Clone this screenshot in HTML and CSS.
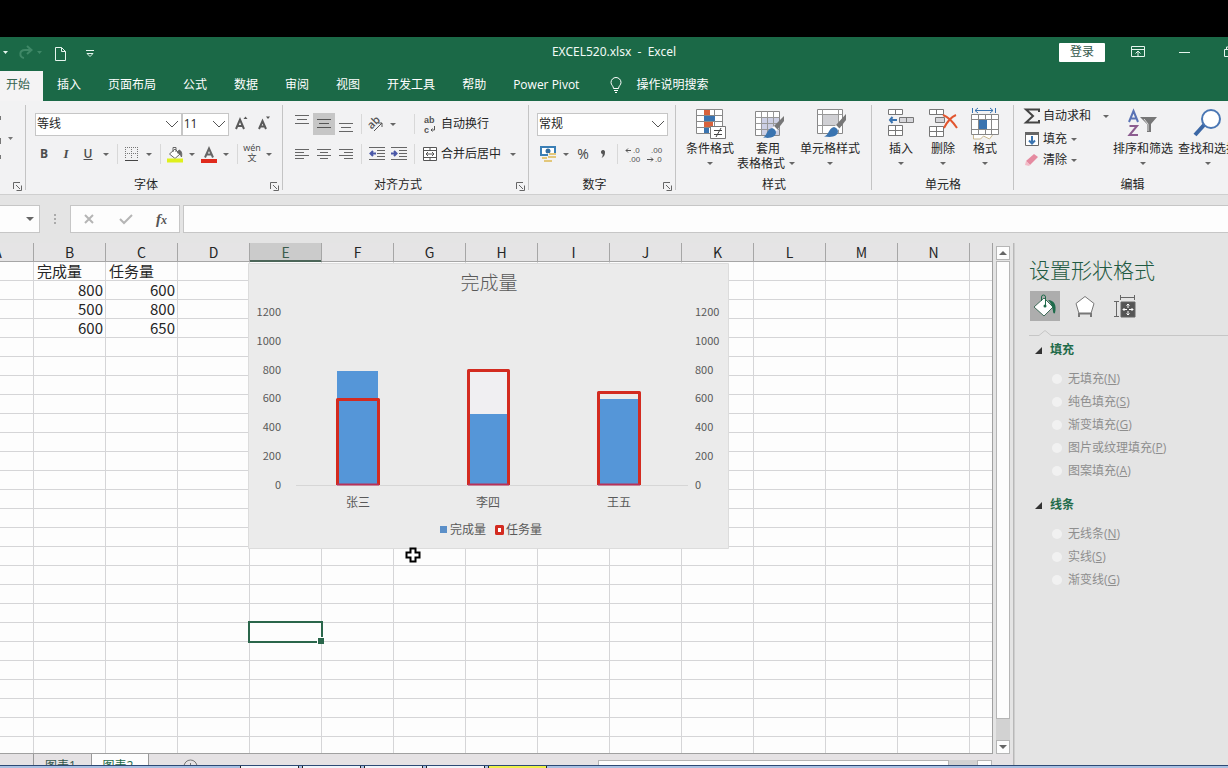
FILE: index.html
```html
<!DOCTYPE html>
<html lang="zh-CN">
<head>
<meta charset="utf-8">
<title>EXCEL520.xlsx - Excel</title>
<link rel="stylesheet" href="styles.css">
</head>
<body>
<div class="letterbox"></div>
<header class="titlebar">
  <div class="quick">
    <svg width="100" height="18" viewBox="0 0 100 18" fill="none" stroke="#e6f5ee">
      <path d="M3 8h5l-2.500 3z" fill="#e6f5ee" stroke="none"/>
      <path d="M24 15c-5-1-5-8 1-8h6M27 3l4.500 4-4.500 4" stroke="#3f8867" stroke-width="2"/>
      <path d="M37 8h5l-2.500 3z" fill="#3f8867" stroke="none"/>
      <path d="M55.500 4.500h6l4 4v9h-10zM61.500 4.500v4h4"/>
      <path d="M86 7.500h8M87 10.500l3 3 3-3z"/>
    </svg>
  </div>
  <h1 class="doc-title">EXCEL520.xlsx&nbsp; -&nbsp; Excel</h1>
  <div class="window-tools">
    <button class="login">登录</button>
    <button class="wbtn" aria-label="功能区显示选项"><svg width="14" height="12" viewBox="0 0 14 12" fill="none" stroke="#e6f5ee"><path d="M.5.5h13v10H.5zM.5 3.500h13M7 10V5M4.500 7.500L7 5l2.500 2.500"/></svg></button>
    <button class="wbtn" aria-label="最小化"><svg width="11" height="12" viewBox="0 0 11 12" stroke="#e6f5ee"><path d="M0 6.500h11"/></svg></button>
    <button class="wbtn" aria-label="还原"><svg width="11" height="12" viewBox="0 0 11 12" fill="none" stroke="#e6f5ee"><path d="M.5 3.500h7v7h-7zM2.500 3V1h7v7h-2"/></svg></button>
  </div>
</header>
<nav class="tabs">
  <button class="tab active">开始</button><button class="tab">插入</button><button class="tab">页面布局</button><button class="tab">公式</button><button class="tab">数据</button><button class="tab">审阅</button><button class="tab">视图</button><button class="tab">开发工具</button><button class="tab">帮助</button><button class="tab">Power Pivot</button>
  <button class="tab tell"><svg width="12" height="16" viewBox="0 0 12 16" fill="none" stroke="#fff"><path d="M3.500 11.500C3.500 9 1 8 1 5.500a5 5 0 0 1 10 0C11 8 8.500 9 8.500 11.500zM4 13.500h4M5 15.500h2"/></svg>操作说明搜索</button>
</nav>

<section class="ribbon">
  <div class="group edge">
    <svg width="16" height="60" viewBox="0 0 16 60" fill="#777"><path d="M0 4h1v4H0zM0 26h1v6H0zM0 43h1v4H0zM8 25h5l-2.500 3z"/></svg>
    <h2 class="glabel"></h2><svg class="launch" width="9" height="9" viewBox="0 0 9 9" fill="none" stroke="#666"><path d="M.5 7V.5H7M3 3l4 4M8.500 3.500v5h-5"/></svg>
  </div>

  <div class="group font">
    <div class="row">
      <select class="combo face" aria-label="字体"><option>等线</option></select><select class="combo size" aria-label="字号"><option>11</option></select>
      <button class="b22" aria-label="增大字号"><svg width="16" height="20" viewBox="0 0 16 20" fill="none" stroke="#5a5a5a" stroke-width="2"><path d="M2 15L6 5.500 10 15M3.500 12h5"/><path d="M9.500 5l2-2.500 2 2.500z" fill="#555" stroke="none"/></svg></button>
      <button class="b22" aria-label="减小字号"><svg width="16" height="20" viewBox="0 0 16 20" fill="none" stroke="#5a5a5a" stroke-width="2"><path d="M3 15l3.500-8 3.500 8M4.500 12.500h4"/><path d="M10 2.500h4L12 5z" fill="#555" stroke="none"/></svg></button>
    </div>
    <div class="row">
      <button class="b22 bold">B</button><button class="b22 ital">I</button><button class="b22 und">U</button><i class="caret"></i><i class="sep"></i>
      <button class="b20" aria-label="边框"><svg width="14" height="14" viewBox="0 0 14 14" fill="none" stroke="#777"><path d="M.5 0v12M6.500 0v12M12.500 0v12M0 .5h13M0 6.500h13" stroke-dasharray="1 1"/><path d="M0 13.500h13" stroke="#444"/></svg></button><i class="caret"></i><i class="sep"></i>
      <button class="b20" aria-label="填充颜色"><svg width="16" height="17" viewBox="0 0 16 17" fill="none" stroke="#666"><path d="M2.500 8l5.500-5 5 5-5 4.500zM6 6V1.500h3V6" fill="#fff"/><path d="M12 4c3 1 3 4 2.500 7-1-3-3-4-4-4z" fill="#666"/><path d="M0 14.500h16" stroke="#dff01c" stroke-width="4"/></svg></button><i class="caret"></i>
      <button class="b20" aria-label="字体颜色"><svg width="16" height="17" viewBox="0 0 16 17" fill="none" stroke="#666" stroke-width="2"><path d="M4 11.500L8 2.500l4 9M5.500 8.500h5"/><path d="M0 15h16" stroke="#e02a1c" stroke-width="4"/></svg></button><i class="caret"></i><i class="sep"></i>
      <button class="b20 pinyin"><span>wén</span><span>文</span></button><i class="caret"></i>
    </div>
    <h2 class="glabel">字体</h2><svg class="launch" width="9" height="9" viewBox="0 0 9 9" fill="none" stroke="#666"><path d="M.5 7V.5H7M3 3l4 4M8.500 3.500v5h-5"/></svg>
  </div>

  <div class="group">
    <div class="row">
      <button class="b22" aria-label="顶端对齐"><svg width="14" height="20" viewBox="0 0 14 20" stroke="#666"><path d="M0 1.500h14M2 5.500h10M0 9.500h14"/></svg></button><button class="b22 on" aria-label="垂直居中"><svg width="14" height="20" viewBox="0 0 14 20" stroke="#555"><path d="M0 5.500h14M2 9.500h10M0 13.500h14"/></svg></button><button class="b22" aria-label="底端对齐"><svg width="14" height="20" viewBox="0 0 14 20" stroke="#666"><path d="M0 9.500h14M2 13.500h10M0 17.500h14"/></svg></button><i class="sep"></i>
      <span class="pair"><button class="b20" aria-label="方向"><svg width="18" height="18" viewBox="0 0 18 18" fill="#555"><text x="1" y="12" font-size="11" font-weight="600" transform="rotate(-45 6 9)">ab</text><path d="M7 16l8-8M11 8h4v4" fill="none" stroke="#555"/></svg></button><i class="caret"></i></span><i class="sep"></i>
      <button class="label"><svg class="mini" width="16" height="20" viewBox="0 0 16 20" fill="#555"><text x="2" y="9" font-size="9" font-weight="700">ab</text><text x="2" y="19" font-size="9" font-weight="700">c</text><path d="M12.500 12v4H9M10.500 14.500L9 16l1.500 1.500" fill="none" stroke="#555"/></svg>自动换行</button>
    </div>
    <div class="row">
      <button class="b22" aria-label="左对齐"><svg width="14" height="12" viewBox="0 0 14 12" stroke="#666"><path d="M0 1.500h14M0 4.500h9M0 7.500h14M0 10.500h9"/></svg></button><button class="b22" aria-label="居中"><svg width="14" height="12" viewBox="0 0 14 12" stroke="#666"><path d="M0 1.500h14M3 4.500h8M0 7.500h14M3 10.500h8"/></svg></button><button class="b22" aria-label="右对齐"><svg width="14" height="12" viewBox="0 0 14 12" stroke="#666"><path d="M0 1.500h14M5 4.500h9M0 7.500h14M5 10.500h9"/></svg></button><i class="sep"></i>
      <span class="pair"><button class="b22" aria-label="减少缩进"><svg width="16" height="14" viewBox="0 0 16 14" fill="none" stroke="#666"><path d="M0 .5h16M8 3.500h8M8 6.500h8M8 9.500h8M0 12.500h16"/><path d="M7 6.500H2M4 4L1.500 6.500 4 9" stroke="#4a58a8" stroke-width="2"/></svg></button><button class="b22" aria-label="增加缩进"><svg width="16" height="14" viewBox="0 0 16 14" fill="none" stroke="#666"><path d="M0 .5h16M8 3.500h8M8 6.500h8M8 9.500h8M0 12.500h16"/><path d="M0 6.500h5M3 4l2.500 2.500L3 9" stroke="#4a58a8" stroke-width="2"/></svg></button></span><i class="sep"></i>
      <button class="label"><svg width="16" height="16" viewBox="0 0 16 16" fill="#fff" stroke="#555"><path d="M1.500 1.500h13v13h-13zM1.500 4.500h13M1.500 11.500h13M8 1.500v3M8 11.500v3M4 8h8M6 6L4 8l2 2M10 6l2 2-2 2"/></svg>合并后居中</button><i class="caret wide"></i>
    </div>
    <h2 class="glabel shifted">对齐方式</h2><svg class="launch" width="9" height="9" viewBox="0 0 9 9" fill="none" stroke="#666"><path d="M.5 7V.5H7M3 3l4 4M8.500 3.500v5h-5"/></svg>
  </div>

  <div class="group">
    <div class="row"><select class="combo numfmt" aria-label="数字格式"><option>常规</option></select></div>
    <div class="row">
      <button class="b22" aria-label="会计数字格式"><svg width="18" height="18" viewBox="0 0 18 18"><path d="M2 2h14v8H2z" fill="#fff" stroke="#3b7fb5" stroke-width="2"/><circle cx="9" cy="6" r="2.500" fill="#356fa0"/><path d="M9 8h9v10H5v-5h4z" fill="#f2f2f3"/><path d="M10 8h7v2h-7zM9 11h8v2H9zM3 12h5v2H3zM5 15h8v2H5z" fill="#e3c77a"/></svg></button><i class="caret"></i>
      <button class="b20 pct">%</button><button class="b20 comma" aria-label="千位分隔"><svg width="6" height="8" viewBox="0 0 6 8" fill="#555"><path d="M1 1.500a2 2 0 1 1 4 1C5 5 4 7 1.500 8 2.500 6.500 3 5 2.500 4A2 2 0 0 1 1 1.500z"/></svg></button><i class="sep"></i>
      <button class="b22" aria-label="增加小数位数"><svg class="mini" width="20" height="20" viewBox="0 0 20 20" fill="#555"><text x="10" y="9" font-size="8">.0</text><text x="6" y="18" font-size="8">.00</text><path d="M8 6.500H3M5 4.500l-2 2 2 2" fill="none" stroke="#555"/></svg></button><button class="b22" aria-label="减少小数位数"><svg class="mini" width="20" height="20" viewBox="0 0 20 20" fill="#555"><text x="6" y="9" font-size="8">.00</text><text x="10" y="18" font-size="8">.0</text><path d="M2 15.500h6M6 13.500l2 2-2 2" fill="none" stroke="#555"/></svg></button>
    </div>
    <h2 class="glabel shifted">数字</h2><svg class="launch" width="9" height="9" viewBox="0 0 9 9" fill="none" stroke="#666"><path d="M.5 7V.5H7M3 3l4 4M8.500 3.500v5h-5"/></svg>
  </div>

  <div class="group bigs">
    <div class="bigrow styles">
      <button class="big"><svg width="32" height="32" viewBox="0 0 32 32"><path d="M2.500 1.500h26v24h-26zM2.500 7.500h26M2.500 13.500h26M2.500 19.500h26M10.500 1.500v24M20.500 1.500v24" fill="#fff" stroke="#888"/><path d="M10 2h6v5h-6zM10 14h9v5h-9z" fill="#d8623c"/><path d="M10 8h11v5H10zM10 20h5v5h-5z" fill="#3a74b0"/><path d="M16.500 18.500h15v12h-15z" fill="#fff" stroke="#777"/><path d="M20 22.500h8M20 26.500h8M27 20l-5 9" stroke="#444"/></svg><span>条件格式</span><i class="caret"></i></button>
      <button class="big"><svg width="32" height="32" viewBox="0 0 32 32"><path d="M3.500 3.500h24v24h-24z" fill="#fff" stroke="#888"/><path d="M10 10h17v17H10z" fill="#cdd0e4"/><path d="M3.500 9.500h24M3.500 15.500h24M3.500 21.500h24M9.500 3.500v24M15.500 3.500v24M21.500 3.500v24" stroke="#999"/><path d="M32 8l-10 10 3 4 7-9z" fill="#777"/><path d="M22 18l4 4-4 2-3-3z" fill="#fff"/><path d="M20 20c5 1 6 8-1 9.500-4 1-6 0-8 0 4-1 3-8 9-9.500z" fill="#3a74b0"/></svg><span>套用</span><span class="tail">表格格式<i class="caret"></i></span></button>
      <button class="big"><svg width="32" height="32" viewBox="0 0 32 32"><path d="M3.500 1.500h25v24h-25z" fill="#fff" stroke="#888"/><path d="M8 7h16v10H8z" fill="#d0d0d4"/><path d="M3.500 6.500h25M3.500 17.500h25M8.500 1.500v24M24.500 1.500v24" stroke="#999"/><path d="M32 6L22 17l3 4 7-9z" fill="#777"/><path d="M22 17l4 4-4 2-3-3z" fill="#fff"/><path d="M20 19c5 1 6 8-1 9.500-4 1-6 0-9 0 5-1 4-8 10-9.500z" fill="#3a74b0"/></svg><span>单元格样式</span><i class="caret"></i></button>
    </div>
    <h2 class="glabel">样式</h2>
  </div>

  <div class="group bigs">
    <div class="bigrow cells">
      <button class="big"><svg width="30" height="32" viewBox="0 0 30 32" fill="#fff" stroke="#777"><path d="M2.500 1.500h14v5h-14zM9.500 1.500v5M2.500 17.500h14v10h-14zM2.500 22.500h14M9.500 17.500v10"/><path d="M13.500 9.500h14v5h-14zM20.500 9.500v5" fill="#d6d6da"/><path d="M11 12H4M6.500 9L4 12l2.500 3" fill="none" stroke="#3a74b0" stroke-width="2"/></svg><span>插入</span><i class="caret"></i></button>
      <button class="big"><svg width="30" height="32" viewBox="0 0 30 32" fill="#fff" stroke="#777"><path d="M1.500 1.500h14v5h-14zM8.500 1.500v5M1.500 18.500h14v10h-14zM1.500 23.500h14M8.500 18.500v10"/><path d="M7.500 9.500h9v5h-9z" fill="#d6d6da"/><path d="M15 7c5 2 10 7 14 13M28 7c-5 2-9 7-12 13" fill="none" stroke="#e2562f" stroke-width="2"/></svg><span>删除</span><i class="caret"></i></button>
      <button class="big"><svg width="30" height="32" viewBox="0 0 30 32" fill="#fff" stroke="#888"><path d="M1.500 6.500h27v20h-27zM1.500 11.500h27M1.500 21.500h27M8.500 6.500v20M15.500 6.500v20M21.500 6.500v20"/><path d="M9 12h8v9H9z" fill="#3a74b0" stroke="none"/><path d="M2.500 0v5M25.500 0v5M5 2.500h18M8 0L5 2.500 8 5M20 0l3 2.500L20 5" stroke="#3a74b0" fill="none"/><path d="M3.500 27v4h7l3-3 6 3 3-4" stroke="#c8b78e"/></svg><span>格式</span><i class="caret"></i></button>
    </div>
    <h2 class="glabel">单元格</h2>
  </div>

  <div class="group bigs last">
    <div class="bigrow edit">
      <div class="stack">
        <button class="label"><svg width="16" height="16" viewBox="0 0 16 16" fill="none" stroke="#444" stroke-width="2"><path d="M15 4V1.500H2L9 8l-7 6.500h13V12"/></svg>自动求和<i class="caret wide"></i></button>
        <button class="label"><svg width="16" height="16" viewBox="0 0 16 16" fill="#fff" stroke="#666"><path d="M1.500 1.500h13v13h-13z"/><path d="M1 2.500h14" stroke-width="3"/><path d="M8 5v7M5 9.500L8 12.500l3-3" fill="none" stroke="#3a74b0" stroke-width="2"/></svg>填充<i class="caret"></i></button>
        <button class="label"><svg width="16" height="14" viewBox="0 0 16 14"><path d="M2 8l8-7 4 3-8 8z" fill="#e58aa0"/><path d="M2 8l4 4-1 1-4-1z" fill="#f3bcc8"/></svg>清除<i class="caret"></i></button>
      </div>
      <button class="big"><svg width="30" height="32" viewBox="0 0 30 32" fill="none" stroke-width="2"><path d="M1 14L5.500 3 10 14M2.500 10.500h6" stroke="#5a73b5"/><path d="M1.500 18H9l-7.500 9H10" stroke="#8c5c8f"/><path d="M12 9h17l-6 7v8h-4v-8z" fill="#777"/><path d="M16 11l4 5v7" stroke="#ddd" stroke-width="1"/></svg><span>排序和筛选</span><i class="caret"></i></button>
      <button class="big"><svg width="30" height="32" viewBox="0 0 30 32"><path d="M11 17L2 27" stroke="#3b67a5" stroke-width="4"/><circle cx="18" cy="11" r="9" fill="#fff" stroke="#4a77b4" stroke-width="2"/></svg><span>查找和选择</span><i class="caret"></i></button>
    </div>
    <h2 class="glabel">编辑</h2>
  </div>
</section>

<section class="formula">
  <button class="namebox" aria-label="名称框"><i class="caret"></i></button>
  <i class="grip"></i>
  <div class="fxbox">
    <svg width="12" height="12" viewBox="0 0 12 12" stroke="#b5b5b5" stroke-width="2"><path d="M2 2l8 8M10 2l-8 8"/></svg>
    <svg width="14" height="12" viewBox="0 0 14 12" fill="none" stroke="#b5b5b5" stroke-width="2"><path d="M1 6l4 4 8-8"/></svg>
    <span class="fx">f<small>x</small></span>
  </div>
  <input class="fxinput" type="text" aria-label="编辑栏">
</section>

<main class="work">
  <div class="left">
    <div class="gridwrap">
      <div class="sheet">
        <table class="cells-table">
          <thead><tr><th>A</th><th>B</th><th>C</th><th>D</th><th class="sel">E</th><th>F</th><th>G</th><th>H</th><th>I</th><th>J</th><th>K</th><th>L</th><th>M</th><th>N</th><th></th></tr></thead>
          <tbody>
            <tr><td></td><td class="txt">完成量</td><td class="txt">任务量</td></tr>
            <tr><td></td><td>800</td><td>600</td></tr>
            <tr><td></td><td>500</td><td>800</td></tr>
            <tr><td></td><td>600</td><td>650</td></tr>
          </tbody>
        </table>
        <svg class="chart" width="481" height="286" viewBox="248 263 481 286" role="img" aria-label="完成量">
          <path d="M248.500 263.500h480v285h-480z" fill="#ebebeb" stroke="#dcdcdc"/>
          <text x="489" y="290" class="ctitle">完成量</text>
          <g class="axis end"><text x="281" y="316">1200</text><text x="281" y="345">1000</text><text x="281" y="374">800</text><text x="281" y="402">600</text><text x="281" y="431">400</text><text x="281" y="460">200</text><text x="281" y="489">0</text></g>
          <g class="axis"><text x="695" y="316">1200</text><text x="695" y="345">1000</text><text x="695" y="374">800</text><text x="695" y="402">600</text><text x="695" y="431">400</text><text x="695" y="460">200</text><text x="695" y="489">0</text></g>
          <path d="M296 485.500h392" stroke="#d6d6d6"/>
          <g fill="#5596d8"><path d="M337 371h41v114h-41zM469 414h39v71h-39zM600 399h38v86h-38z"/></g>
          <path d="M470 372h37v42h-37z" fill="#f0eff2"/>
          <g fill="none" stroke="#d32b20" stroke-width="3" stroke-linejoin="round"><path d="M337.500 485V399.500h41V485M468.500 485V370.500h40V485M598.500 485V392.500h41V485"/><path d="M337 484.500h42M468 484.500h41M598 484.500h42" stroke="#b8325a" stroke-width="2"/></g>
          <g class="cat"><text x="358" y="507">张三</text><text x="488" y="507">李四</text><text x="619" y="507">王五</text></g>
          <path d="M440 526h7v7h-7z" fill="#5b8fc8"/>
          <path d="M496.500 526.500h6v7h-6z" fill="#fff" stroke="#d32b20" stroke-width="3" stroke-linejoin="round"/>
          <g class="leg"><text x="450" y="534">完成量</text><text x="506" y="534">任务量</text></g>
        </svg>
        <div class="selection"></div>
        <svg class="pointer" width="16" height="16" viewBox="0 0 16 16"><path d="M5.500 1.500h5v4h4v5h-4v4h-5v-4h-4v-5h4z" fill="#fff" stroke="#000" stroke-width="2"/></svg>
      </div>
      <div class="vscroll">
        <button class="sbtn" aria-label="向上滚动"><i class="caret up"></i></button>
        <div class="thumb"></div><div class="track"></div>
        <button class="sbtn" aria-label="向下滚动"><i class="caret"></i></button>
      </div>
    </div>
    <div class="sheetbar">
      <button class="stab">图表1</button><button class="stab on">图表2</button>
      <button class="add" aria-label="新工作表"><svg width="15" height="15" viewBox="0 0 15 15" fill="none" stroke="#777"><circle cx="7.500" cy="7.500" r="6.500"/><path d="M7.500 4v7M4 7.500h7"/></svg></button>
      <div class="hscroll"><div class="hthumb"></div><div class="htrack"></div><div class="hbtn"></div></div>
    </div>
  </div>

  <aside class="pane">
    <h2 class="ptitle">设置形状格式</h2>
    <div class="picons">
      <button class="on" aria-label="填充与线条"><svg width="26" height="26" viewBox="0 0 26 26"><path d="M2 14l10-9 9 9-9 9z" fill="#fff" stroke="#3f6b58"/><path d="M9.500 8V4a2 2 0 0 1 4 0v9" fill="none" stroke="#1e6b4b" stroke-width="1"/><circle cx="13" cy="13" r="1.500" fill="#1e6b4b"/><path d="M16 7c6 0 9 5 7 13-1 1-2 0-2-2-1-5-2-8-5-11z" fill="#1e6b4b"/></svg></button>
      <button aria-label="效果"><svg width="26" height="26" viewBox="0 0 26 26" fill="#fff" stroke="#777"><path d="M13 3.500l9 7-3 10H7l-3-10z"/><path d="M7 20.500h12M7 20v4M19 20v4" stroke-width="2"/></svg></button>
      <button aria-label="大小与属性"><svg width="26" height="26" viewBox="0 0 26 26" fill="none" stroke="#666"><path d="M9 9h14v15H9z" fill="#555"/><path d="M8 4.500h15M8.500 2v5M22.500 2v5M4.500 8v16M2 8.500h5M2 23.500h5"/><path d="M16 11v4M16 18v4M11 16.500h4M17 16.500h4M14.500 12.500L16 11l1.500 1.500M14.500 20.500L16 22l1.500-1.500M12.500 15L11 16.500l1.500 1.500M19.500 15l1.500 1.500-1.500 1.500" stroke="#fff"/></svg></button>
    </div>
    <svg class="rule" height="6" viewBox="0 0 200 6" preserveAspectRatio="xMinYMid slice" fill="none" stroke="#c6c6c6"><path d="M0 5.500h10l6-5 6 5h400"/></svg>
    <fieldset>
      <legend>填充</legend>
      <label><input type="radio" name="fill" disabled>无填充(<u>N</u>)</label>
      <label><input type="radio" name="fill" disabled>纯色填充(<u>S</u>)</label>
      <label><input type="radio" name="fill" disabled>渐变填充(<u>G</u>)</label>
      <label><input type="radio" name="fill" disabled>图片或纹理填充(<u>P</u>)</label>
      <label><input type="radio" name="fill" disabled>图案填充(<u>A</u>)</label>
    </fieldset>
    <fieldset>
      <legend>线条</legend>
      <label><input type="radio" name="line" disabled>无线条(<u>N</u>)</label>
      <label><input type="radio" name="line" disabled>实线(<u>S</u>)</label>
      <label><input type="radio" name="line" disabled>渐变线(<u>G</u>)</label>
    </fieldset>
  </aside>
</main>
<footer class="taskbar"><i></i><i></i><i></i><i></i><i class="yellow"></i></footer>
</body>
</html>
```
FILE: styles.css
```css
* { box-sizing: border-box; }
body {
  margin: 0; height: 100vh; overflow: hidden; display: flex; flex-direction: column;
  font: 12px/16px "Open Sans", "Noto Sans CJK SC", sans-serif; color: #262626; background: #e4e4e4;
}
button, input, select { font: inherit; color: inherit; margin: 0; padding: 0; border: 0; background: none; border-radius: 0; }
h1, h2 { margin: 0; font-size: 12px; font-weight: 400; }
svg { display: block; flex: none; overflow: visible; }
button { white-space: nowrap; }

.letterbox { height: 37px; background: #000; flex: none; }
.titlebar {
  height: 30px; flex: none; display: grid; grid-template-columns: 1fr auto 1fr;
  align-items: center; background: #1b6947; color: #f2faf6;
}
.doc-title { font-family: "Noto Sans", "Open Sans", sans-serif; }
.window-tools { display: flex; justify-content: flex-end; align-items: center; gap: 26px; margin-right: -7px; }
.login { width: 46px; height: 19px; background: #fff; color: #33564a; border-radius: 1px; }
.wbtn + .wbtn { margin-left: 8px; }
.tabs { height: 34px; flex: none; background: #1b6947; color: #fff; display: flex; align-items: flex-end; gap: 27px; }
.tab { height: 30px; padding-bottom: 2px; }
.tab.active { background: #f4f3f4; color: #35644f; padding-left: 6px; padding-right: 13px; margin-right: -13px; }
.tell { display: flex; align-items: center; gap: 14px; margin-left: 4px; }

.ribbon {
  flex: none; height: 94px; background: #f2f2f3; border-bottom: 1px solid #cfcfcf; overflow: hidden;
  display: grid; grid-template-columns: 26px 257px 246px 147px 196px 142px minmax(234px, 1fr);
}
.group { position: relative; padding: 11px 8px 0; display: flex; flex-direction: column; }
.group::after { content: ""; position: absolute; right: 0; top: 4px; bottom: 4px; width: 1px; background: #c4c4c4; }
.group.last::after { display: none; }
.group.font { padding-left: 7px; }
.group.edge { padding-left: 0; }
.group.bigs { padding: 7px 7px 0; }
.group.last { padding-left: 10px; }
.glabel { margin-top: auto; height: 17px; text-align: center; line-height: 16px; }
.group:not(.bigs) .glabel { padding-right: 16px; }
.launch { position: absolute; right: 4px; bottom: 3px; }
.row { height: 24px; display: flex; align-items: center; margin-bottom: 6px; }
.group.font .row:first-child { padding-left: 2px; }
.b22, .b20 { height: 22px; display: flex; align-items: center; justify-content: center; flex: none; }
.b22 { width: 22px; }
.b20 { width: 20px; }
.b22.on { background: #c6c6c6; }
.pinyin { flex-direction: column; font-size: 9px; line-height: 9px; color: #444; height: 24px; padding-bottom: 2px; }
.pinyin span { height: 10px; line-height: 10px; }
.mini { font-family: "Liberation Sans", sans-serif; }
.bold { font-weight: 700; }
.ital { font: italic 700 13px "Liberation Serif", serif; }
.und { font-weight: 600; text-decoration: underline; }
.bold, .ital, .und { color: #4c4c4c; }
.pct { font-size: 14px; color: #444; }
.comma { color: #444; }
.caret { width: 14px; height: 8px; flex: none; display: inline-flex; align-items: center; justify-content: center; }
.caret::before { content: ""; border: solid transparent; border-width: 3px 3px 0; border-top-color: #666; }
.caret.up::before { border-width: 0 4px 4px; border-bottom-color: #666; }
.caret.wide { margin-left: 5px; }
.sep { width: 1px; height: 20px; background: #d8d8d8; margin: 0 4px; flex: none; }
.pair { width: 44px; display: flex; align-items: center; }
.label { display: flex; align-items: center; gap: 3px; }
.row .label { margin-left: 3px; }
.combo {
  appearance: none; height: 23px; border: 1px solid #c6c6c6; padding: 0 1px;
  background: #fff url("data:image/svg+xml,%3Csvg xmlns='http://www.w3.org/2000/svg' width='14' height='8' fill='none' stroke='%23555'%3E%3Cpath d='M1 1l6 6 6-6'/%3E%3C/svg%3E") no-repeat right 2px center;
}
.face { width: 149px; }
.size { width: 48px; margin-right: 2px; }
.numfmt { width: 131px; }

.bigrow { display: flex; height: 65px; gap: 2px; }
.big { display: flex; flex-direction: column; align-items: center; line-height: 15px; flex: none; justify-content: flex-start; }
.big span { margin-top: 1px; height: 15px; }
.big > .caret { height: 14px; }
.big .tail { display: flex; align-items: center; margin-top: 0; }
.styles .big { width: 54px; }
.styles .big + .big { width: 58px; }
.styles .big + .big + .big { width: 62px; }
.cells { gap: 0; padding-left: 1px; }
.cells .big { width: 42px; }
.edit { gap: 3px; }
.edit .big { width: 62px; }
.stack { width: 85px; display: flex; flex-direction: column; }
.stack .label { height: 23px; width: max-content; padding-bottom: 7px; }
.stack .label:not(:first-child) { padding-bottom: 5px; }
.stack .caret:not(.wide) { margin-left: -3px; }

.formula { height: 48px; flex: none; display: flex; align-items: center; background: #e4e4e4; }
.namebox, .fxbox, .fxinput { height: 28px; background: #fdfdfd; border: 1px solid #c6c6c6; }
.namebox { width: 40px; border-left: 0; display: flex; align-items: center; justify-content: flex-end; padding-right: 2px; }
.namebox .caret::before, .sbtn .caret:not(.up)::before { border-width: 4px 4px 0; }
.grip { width: 2px; height: 11px; margin: 0 14px; background: repeating-linear-gradient(#aaa 0 2px, transparent 2px 4px); }
.fxbox { width: 110px; display: flex; align-items: center; justify-content: space-between; padding: 0 12px; }
.fx { font: italic 700 15px "Liberation Serif", serif; color: #555; }
.fx small { font-size: 12px; }
.fxinput { flex: 1; margin-left: 3px; min-width: 0; padding: 0 6px; border-right: 0; }

.work { flex: 1; min-height: 0; display: flex; }
.left { flex: 1; min-width: 0; display: flex; flex-direction: column; }
.gridwrap { flex: 1; min-height: 0; display: flex; }
.sheet {
  flex: 1; min-width: 0; position: relative; overflow: hidden; border: solid #a0a0a0; border-width: 0 1px 1px 0;
  background:
    repeating-linear-gradient(90deg, transparent 0 33px, #d5d5d7 33px 34px, transparent 34px 72px),
    repeating-linear-gradient(#fdfdfd 0 18px, #d5d5d7 18px 19px);
}
.cells-table { table-layout: fixed; width: 1080px; margin-left: -38px; border-collapse: separate; border-spacing: 0; font: 15px/17px "Noto Sans CJK SC", sans-serif; }
.cells-table th { height: 19px; padding: 0; font-size: 14px; font-weight: 400; line-height: 18px; background: #e5e4e5; border: solid #a6a6a6; border-width: 0 1px 1px 0; }
.cells-table th.sel { background: #cbcbcb; box-shadow: inset 0 -1px #4c6659; border-bottom-color: #4c6659; color: #3b5c4c; }
.cells-table td { height: 19px; padding: 0 3px 2px; text-align: right; vertical-align: middle; }
.cells-table td.txt { text-align: left; }
.chart { position: absolute; left: 248px; top: 20px; font-family: "Noto Sans CJK SC", sans-serif; fill: #595959; }
.ctitle { font-size: 19px; text-anchor: middle; font-weight: 300; }
.axis { font-size: 11px; }
.end { text-anchor: end; }
.cat { font-size: 12px; text-anchor: middle; }
.leg { font-size: 12px; }
.selection { position: absolute; left: 248px; top: 378px; width: 75px; height: 22px; border: 2px solid #2a664b; }
.selection::after { content: ""; position: absolute; right: -3px; bottom: -3px; width: 6px; height: 6px; background: #2a664b; border: solid #fff; border-width: 1px 0 0 1px; }
.pointer { position: absolute; left: 405px; top: 304px; }

.vscroll { width: 21px; flex: none; padding: 3px 3px 0; display: flex; flex-direction: column; border-right: 1px solid #b8b8b8; }
.sbtn { height: 14px; background: #fdfdfd; border: 1px solid #b5b5b5; display: flex; align-items: center; justify-content: center; flex: none; }
.thumb { flex: 460; background: #fdfdfd; border: 1px solid #b5b5b5; margin-top: 1px; }
.track { flex: 21; background: #d2d2d2; }
.sheetbar { height: 11px; flex: none; overflow: hidden; display: flex; align-items: flex-start; background: #e5e2e4; border-right: 1px solid #b8b8b8; }
.stab { height: 20px; width: 58px; padding-top: 4px; padding-right: 4px; color: #33564a; flex: none; }
.stab:first-child { margin-left: 33px; border-left: 1px solid #999; }
.stab.on { background: #fdfdfd; border: solid #999; border-width: 0 1px; color: #1b6947; }
.add { margin: 5px 0 0 34px; }
.hscroll { flex: 1; display: flex; align-items: stretch; height: 12px; margin: 6px 21px 0 400px; }
.hthumb { flex: 1; background: #fdfdfd; border: 1px solid #b5b5b5; }
.htrack { width: 28px; background: #d2d2d2; }
.hbtn { width: 15px; background: #fdfdfd; border: 1px solid #b5b5b5; }

.pane { width: 214px; flex: none; border-left: 1px solid #cecece; padding: 12px 0 0 14px; background: #e4e4e4; overflow: hidden; }
.ptitle { font-size: 21px; line-height: 30px; font-weight: 300; color: #1f5a42; }
.picons { display: flex; gap: 10px; margin-top: 6px; padding-left: 1px; }
.picons button { width: 30px; height: 30px; display: flex; align-items: center; justify-content: center; }
.picons .on { background: #adadad; }
.rule { width: 100%; margin-top: 9px; overflow: hidden; }
fieldset { border: 0; margin: 0; padding: 0; }
fieldset + fieldset { margin-top: 9px; }
legend { display: flex; align-items: center; gap: 8px; height: 28px; padding: 0 0 0 6px; font-weight: 700; color: #1f6b4a; }
legend::before { content: ""; border: solid #333; border-width: 0 0 7px 7px; border-left-color: transparent; }
fieldset label { display: flex; align-items: center; height: 23px; padding-left: 23px; color: #8e8e8e; }
fieldset legend + label { margin-top: 3px; }
fieldset input { appearance: none; width: 10px; height: 10px; border-radius: 5px; background: #f1f1f1; margin-right: 6px; }

.taskbar { height: 3px; flex: none; background: #a9c0e2; border-top: 1px solid #2d4a75; padding-left: 240px; display: flex; gap: 3px; }
.taskbar i { width: 59px; background: #f0f4fa; border: solid #222; border-width: 0 1px; }
.taskbar .yellow { background: #eef04a; }
```
